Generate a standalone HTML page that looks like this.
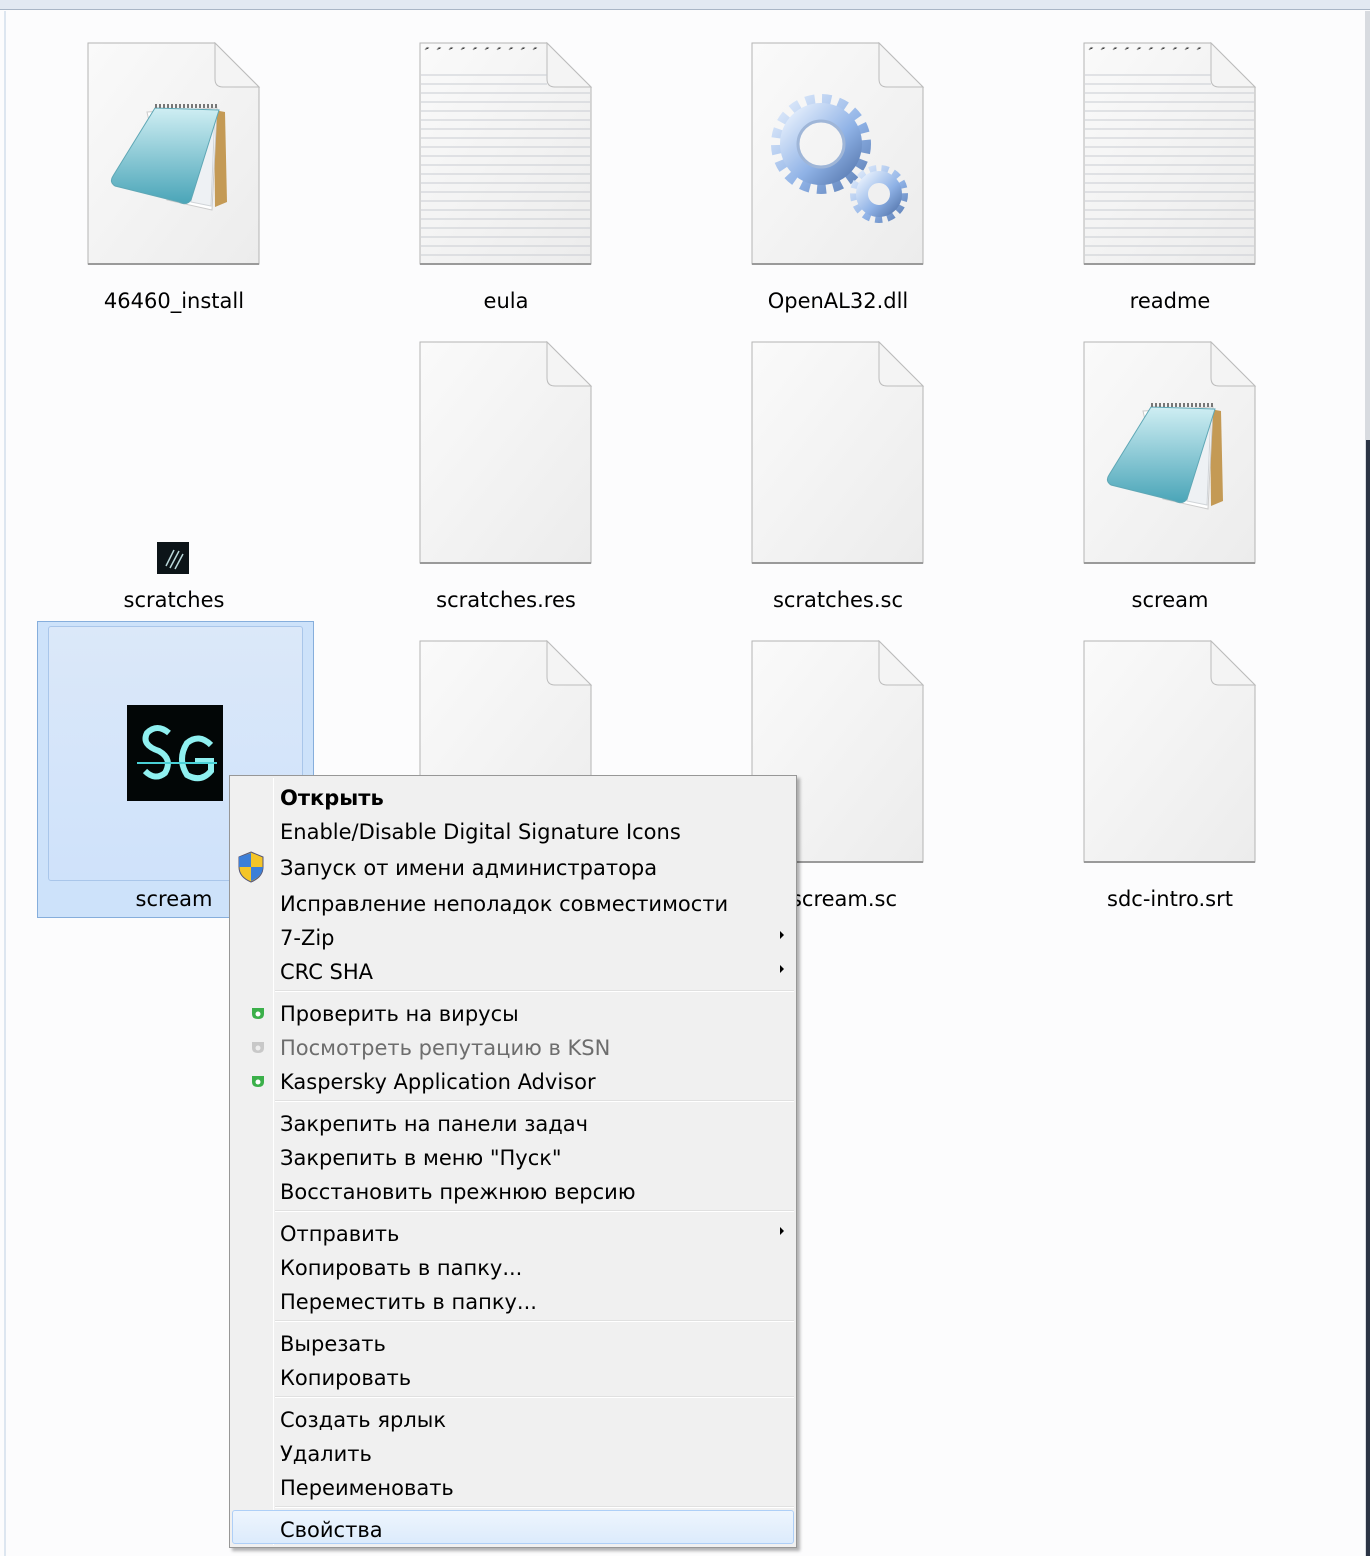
<!DOCTYPE html>
<html><head><meta charset="utf-8"><style>
*{margin:0;padding:0;box-sizing:border-box}
body{width:1370px;height:1556px;background:#fcfcfd;position:relative;overflow:hidden;font-family:"Segoe UI","DejaVu Sans","Liberation Sans",sans-serif;color:#000}
.top{position:absolute;left:0;top:0;width:1370px;height:10px;background:#e2e9f2;border-bottom:1px solid #a9b6c6}
.ledge{position:absolute;left:4px;top:11px;width:2px;height:1545px;background:#dde6f0}
.redge{position:absolute;left:1365px;top:11px;width:5px;height:1545px;background:#d8dbe0}
.redge2{position:absolute;left:1366px;top:440px;width:4px;height:1116px;background:#2b3445}
.ic{position:absolute;width:176px;height:226px}
.lbl{position:absolute;width:300px;text-align:center;font-size:21px;line-height:26px}
.sel{position:absolute;left:37px;top:621px;width:277px;height:297px;background:#cde2fa;border:1px solid #86aedc}
.seli{position:absolute;left:10px;top:4px;width:255px;height:255px;border:1px solid #a9c6ea;border-radius:3px;background:linear-gradient(#dbe8f9,#cfe2fa)}
.menu{position:absolute;left:229px;top:775px;width:568px;height:773px;background:#f0f0f0;border:1px solid #979797;box-shadow:3px 3px 3px rgba(0,0,0,.3)}
.gut{position:absolute;left:43px;top:2px;width:1px;height:767px;background:#e2e3e3;border-right:1px solid #fff}
.it{position:absolute;left:50px;height:34px;line-height:34px;font-size:21px;white-space:nowrap}
.sep{position:absolute;left:45px;width:519px;height:2px;border-top:1px solid #e0e0e0;border-bottom:1px solid #fff}
.arr{position:absolute;left:550px;width:0;height:0;border-top:4px solid transparent;border-bottom:4px solid transparent;border-left:4px solid #000}
.hl{position:absolute;left:2px;top:734px;width:562px;height:34px;border:1px solid #aecff7;border-radius:3px;background:linear-gradient(#eef5fd,#dcebfc)}
</style></head><body>
<div class="top"></div><div class="ledge"></div><div class="redge"></div><div class="redge2"></div>

<svg width="0" height="0" style="position:absolute">
<defs>
<linearGradient id="pg" x1="0" y1="0" x2="1" y2="1"><stop offset="0" stop-color="#fafafa"/><stop offset="1" stop-color="#ececec"/></linearGradient>
<linearGradient id="bl" x1="0" y1="0" x2="0" y2="1"><stop offset="0" stop-color="#cfeef3"/><stop offset="1" stop-color="#4aa5b8"/></linearGradient>
<linearGradient id="gr" x1="0" y1="0" x2="1" y2="1"><stop offset="0" stop-color="#e4eefc"/><stop offset=".6" stop-color="#8fb2e6"/><stop offset="1" stop-color="#5d7fb5"/></linearGradient>
<g id="page"><path d="M1,1H128L172,45V222H1Z" fill="url(#pg)" stroke="#b4b4b4"/><path d="M128,1L172,45H136Q128,45 128,37Z" fill="#f4f4f4" stroke="#bcbcbc"/><path d="M1,222H172" stroke="#9a9a9a" stroke-width="2"/></g>
<g id="lines" stroke="#c9ccd2" stroke-width="1">
<path d="M2,33H128M2,42H128M2,51H171M2,60H171M2,69H171M2,78H171M2,87H171M2,96H171M2,105H171M2,114H171M2,123H171M2,132H171M2,141H171M2,150H171M2,159H171M2,168H171M2,177H171M2,186H171M2,195H171M2,204H171M2,213H171"/>
<path d="M6,8q2,-4 4,-2M18,8q2,-4 4,-2M30,8q2,-4 4,-2M42,8q2,-4 4,-2M54,8q2,-4 4,-2M66,8q2,-4 4,-2M78,8q2,-4 4,-2M90,8q2,-4 4,-2M102,8q2,-4 4,-2M114,8q2,-4 4,-2" stroke="#999"/>
</g>
<g id="note"><path d="M127,68L138,70L140,160L128,165Z" fill="#c49a55"/><path d="M60,70L130,66L125,168L80,158Z" fill="#fff" stroke="#ccc"/><path d="M112,80L128,70L124,164L104,160Z" fill="#eef1f4" stroke="#d0d4d8"/><path d="M68,66L132,68L104,158Q100,164 92,160L28,144Q22,140 26,134Z" fill="url(#bl)" stroke="#5fa7b5"/><path d="M68,64H132" stroke="#777" stroke-width="4" stroke-dasharray="2,2"/></g>
</defs></svg>

<!-- row1 -->
<svg class="ic" style="left:87px;top:42px"><use href="#page"/><use href="#note"/></svg>
<svg class="ic" style="left:419px;top:42px"><use href="#page"/><use href="#lines"/></svg>
<svg class="ic" style="left:751px;top:42px"><use href="#page"/>
<circle cx="70" cy="102" r="44" fill="none" stroke="url(#gr)" stroke-width="12" stroke-dasharray="9,7"/><circle cx="70" cy="102" r="32" fill="none" stroke="url(#gr)" stroke-width="18"/><circle cx="70" cy="102" r="23" fill="none" stroke="#9fb6d8" stroke-width="3"/>
<circle cx="128" cy="152" r="25" fill="none" stroke="url(#gr)" stroke-width="8" stroke-dasharray="7,5"/><circle cx="128" cy="152" r="17" fill="none" stroke="url(#gr)" stroke-width="12"/></svg>
<svg class="ic" style="left:1083px;top:42px"><use href="#page"/><use href="#lines"/></svg>
<div class="lbl" style="left:24px;top:288px">46460_install</div>
<div class="lbl" style="left:356px;top:288px">eula</div>
<div class="lbl" style="left:688px;top:288px">OpenAL32.dll</div>
<div class="lbl" style="left:1020px;top:288px">readme</div>

<!-- row2 -->
<svg style="position:absolute;left:157px;top:542px" width="33" height="33"><rect x="0" y="0" width="32" height="32" fill="#0c1418"/><path d="M9,24L17,8M13,26L22,9M18,27L26,12" stroke="#b9d7d9" stroke-width="1.5"/></svg>
<svg class="ic" style="left:419px;top:341px"><use href="#page"/></svg>
<svg class="ic" style="left:751px;top:341px"><use href="#page"/></svg>
<svg class="ic" style="left:1083px;top:341px"><use href="#page"/><use href="#note"/></svg>
<div class="lbl" style="left:24px;top:587px">scratches</div>
<div class="lbl" style="left:356px;top:587px">scratches.res</div>
<div class="lbl" style="left:688px;top:587px">scratches.sc</div>
<div class="lbl" style="left:1020px;top:587px">scream</div>

<!-- row3 -->
<div class="sel"><div class="seli"></div></div>
<svg style="position:absolute;left:127px;top:705px" width="96" height="96"><rect width="96" height="96" fill="#020606"/>
<path d="M42,28Q30,18 20,28Q14,40 32,46Q46,54 38,68Q28,76 18,66" fill="none" stroke="#8ff0f0" stroke-width="6"/>
<path d="M84,40Q72,28 60,38Q50,54 60,70Q74,78 84,66V56H68" fill="none" stroke="#8ff0f0" stroke-width="6"/>
<path d="M10,58H90" stroke="#4ad0d6" stroke-width="2"/></svg>
<svg class="ic" style="left:419px;top:640px"><use href="#page"/></svg>
<svg class="ic" style="left:751px;top:640px"><use href="#page"/></svg>
<svg class="ic" style="left:1083px;top:640px"><use href="#page"/></svg>
<div class="lbl" style="left:24px;top:886px">scream</div>
<div class="lbl" style="left:694px;top:886px">scream.sc</div>
<div class="lbl" style="left:1020px;top:886px">sdc-intro.srt</div>

<!-- menu -->
<div class="menu">
<div class="gut"></div>
<div class="hl"></div>
<div class="it" style="top:5px;font-weight:bold">Открыть</div>
<div class="it" style="top:39px">Enable/Disable Digital Signature Icons</div>
<svg style="position:absolute;left:7px;top:75px" width="28" height="32"><path d="M14,1L26,6V16Q26,26 14,31Q2,26 2,16V6Z" fill="#f4c528" stroke="#557" stroke-width="1"/><path d="M14,2V16H2V6Z" fill="#3c7fd8"/><path d="M14,16H26Q25,26 14,30Z" fill="#3c7fd8"/></svg>
<div class="it" style="top:75px">Запуск от имени администратора</div>
<div class="it" style="top:111px">Исправление неполадок совместимости</div>
<div class="it" style="top:145px">7-Zip</div><div class="arr" style="top:155px"></div>
<div class="it" style="top:179px">CRC SHA</div><div class="arr" style="top:189px"></div>
<div class="sep" style="top:214px"></div>
<svg style="position:absolute;left:20px;top:230px" width="16" height="14"><path d="M2,2H14V8Q14,13 8,13Q2,13 2,8Z" fill="#3bb04a"/><circle cx="8" cy="8" r="2.5" fill="#fff"/></svg>
<div class="it" style="top:221px">Проверить на вирусы</div>
<svg style="position:absolute;left:20px;top:264px" width="16" height="14"><path d="M2,2H14V8Q14,13 8,13Q2,13 2,8Z" fill="#c8c8c8"/><circle cx="8" cy="8" r="2.5" fill="#eee"/></svg>
<div class="it" style="top:255px;color:#6d6d6d">Посмотреть репутацию в KSN</div>
<svg style="position:absolute;left:20px;top:298px" width="16" height="14"><path d="M2,2H14V8Q14,13 8,13Q2,13 2,8Z" fill="#3bb04a"/><circle cx="8" cy="8" r="2.5" fill="#fff"/></svg>
<div class="it" style="top:289px">Kaspersky Application Advisor</div>
<div class="sep" style="top:324px"></div>
<div class="it" style="top:331px">Закрепить на панели задач</div>
<div class="it" style="top:365px">Закрепить в меню "Пуск"</div>
<div class="it" style="top:399px">Восстановить прежнюю версию</div>
<div class="sep" style="top:434px"></div>
<div class="it" style="top:441px">Отправить</div><div class="arr" style="top:451px"></div>
<div class="it" style="top:475px">Копировать в папку...</div>
<div class="it" style="top:509px">Переместить в папку...</div>
<div class="sep" style="top:544px"></div>
<div class="it" style="top:551px">Вырезать</div>
<div class="it" style="top:585px">Копировать</div>
<div class="sep" style="top:620px"></div>
<div class="it" style="top:627px">Создать ярлык</div>
<div class="it" style="top:661px">Удалить</div>
<div class="it" style="top:695px">Переименовать</div>
<div class="sep" style="top:730px"></div>
<div class="it" style="top:737px">Свойства</div>
</div>
</body></html>
